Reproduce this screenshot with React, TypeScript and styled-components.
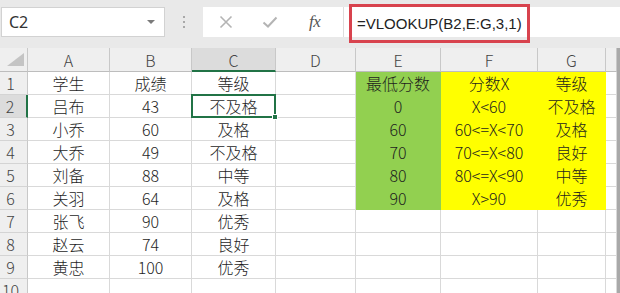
import React from "react";
import styled, { createGlobalStyle } from "styled-components";

const GlobalStyle = createGlobalStyle`
  html, body { margin: 0; padding: 0; background: #ffffff; overflow: hidden; }
  * { box-sizing: border-box; }
`;

const CJK = `"Noto Sans CJK SC", "Noto Sans", sans-serif`;

const Window = styled.div`
  width: 620px;
  height: 293px;
  overflow: hidden;
  background: #ffffff;
`;

const Toolbar = styled.div`
  height: 48px;
  background: #e9e9e9;
  display: flex;
  align-items: flex-start;
  padding: 7px 0 0 1px;
`;

const NameBox = styled.div`
  width: 164px;
  height: 30px;
  background: #ffffff;
  border: 1px solid #d2d2d2;
  display: flex;
  align-items: center;
  justify-content: space-between;
  padding: 0 9px 0 7px;
  font-family: "Noto Sans", sans-serif;
  font-size: 16px;
  color: #333333;
`;

const DropArrow = styled.span`
  width: 0;
  height: 0;
  border-left: 4px solid transparent;
  border-right: 4px solid transparent;
  border-top: 4px solid #7a7a7a;
`;

const Grip = styled.div`
  width: 38px;
  height: 30px;
  display: flex;
  flex-direction: column;
  align-items: center;
  justify-content: center;
  gap: 3px;
`;

const GripDot = styled.span`
  width: 2px;
  height: 2px;
  background: #a8a8a8;
`;

const FxBox = styled.div`
  width: 140px;
  height: 30px;
  background: #ffffff;
  display: flex;
  align-items: center;
  padding-left: 16px;
`;

const IconSlot = styled.span<{ $gap: number }>`
  display: inline-flex;
  margin-right: ${(p) => p.$gap}px;
`;

const FxText = styled.span`
  font-family: "Liberation Serif", serif;
  font-style: italic;
  font-size: 17px;
  color: #555555;
  letter-spacing: -0.5px;
`;

const FormulaInput = styled.div`
  flex: 1;
  height: 30px;
  background: #ffffff;
  border-left: 1px solid #dddddd;
  display: flex;
  align-items: center;
  padding-left: 5px;
`;

const RedBox = styled.div`
  width: 181px;
  height: 39px;
  margin-top: 3px;
  border: 3px solid #d8434e;
  display: flex;
  align-items: center;
  padding-left: 5px;
  font-family: "Liberation Sans", Arial, sans-serif;
  font-size: 15px;
  color: #222222;
  white-space: nowrap;
`;

const SheetArea = styled.div`
  display: flex;
  height: 245px;
`;

const Grid = styled.div`
  display: grid;
  grid-template-columns: 28px 82px 82px 84px 80px 85px 97px 68px 11px;
  grid-template-rows: 24px repeat(10, 23px);
  width: 617px;
`;

const ScrollEdge = styled.div`
  width: 3px;
  background: #a9a9a9;
`;

const Corner = styled.div`
  background: #efefef;
  border-right: 1px solid #c8c8c8;
  border-bottom: 1px solid #bdbdbd;
  display: flex;
  align-items: flex-end;
  justify-content: flex-end;
  padding: 0 3px 5px 0;
`;

const CornerTriangle = styled.span`
  width: 0;
  height: 0;
  border-left: 17px solid transparent;
  border-bottom: 13px solid #c4c4c4;
`;

const ColHeader = styled.div<{ $active?: boolean }>`
  background: ${(p) => (p.$active ? "#dcdcdc" : "#efefef")};
  border-right: 1px solid #c8c8c8;
  border-bottom: ${(p) => (p.$active ? "2px solid #217346" : "1px solid #bdbdbd")};
  display: flex;
  align-items: center;
  justify-content: center;
  padding-top: 1px;
  font-family: ${CJK};
  font-weight: 300;
  font-size: 16px;
  color: #444444;
`;

const RowHeader = styled.div<{ $active?: boolean }>`
  background: ${(p) => (p.$active ? "#dcdcdc" : "#efefef")};
  border-right: ${(p) => (p.$active ? "2px solid #217346" : "1px solid #c8c8c8")};
  border-bottom: 1px solid #d4d4d4;
  display: flex;
  align-items: flex-end;
  justify-content: center;
  padding-right: 6px;
  font-family: ${CJK};
  font-weight: 300;
  font-size: 16px;
  line-height: 21px;
  color: #444444;
`;

const Cell = styled.div<{ $fill?: string }>`
  position: relative;
  background: ${(p) => p.$fill || "#ffffff"};
  border-right: 1px solid ${(p) => p.$fill || "#d9d9d9"};
  border-bottom: 1px solid ${(p) => p.$fill || "#d9d9d9"};
  display: flex;
  align-items: flex-end;
  justify-content: center;
  font-family: ${CJK};
  font-weight: 300;
  font-size: 16px;
  line-height: 21px;
  color: #1e1e1e;
  white-space: nowrap;
`;

const Selection = styled.div`
  position: absolute;
  left: -1px;
  top: -1px;
  right: -1px;
  bottom: -1px;
  border: 2px solid #217346;
  z-index: 2;
  pointer-events: none;
`;

const FillHandle = styled.span`
  position: absolute;
  right: -4px;
  bottom: -4px;
  width: 6px;
  height: 6px;
  background: #217346;
  border: 1px solid #ffffff;
`;

const GREEN = "#92d050";
const YELLOW = "#ffff00";

const columns = ["A", "B", "C", "D", "E", "F", "G", ""];

const rows: string[][] = [
  ["学生", "成绩", "等级", "", "最低分数", "分数X", "等级"],
  ["吕布", "43", "不及格", "", "0", "X<60", "不及格"],
  ["小乔", "60", "及格", "", "60", "60<=X<70", "及格"],
  ["大乔", "49", "不及格", "", "70", "70<=X<80", "良好"],
  ["刘备", "88", "中等", "", "80", "80<=X<90", "中等"],
  ["关羽", "64", "及格", "", "90", "X>90", "优秀"],
  ["张飞", "90", "优秀"],
  ["赵云", "74", "良好"],
  ["黄忠", "100", "优秀"],
  [],
];

const fillFor = (r: number, c: number): string | undefined => {
  if (r > 5) return undefined;
  if (c === 4) return GREEN;
  if (c === 5 || c === 6) return YELLOW;
  return undefined;
};

const CloseIcon = () => (
  <svg width="14" height="14" viewBox="0 0 14 14">
    <path d="M1.5 1.5 L12.5 12.5 M12.5 1.5 L1.5 12.5" stroke="#b4b4b4" strokeWidth="1.6" fill="none" />
  </svg>
);

const CheckIcon = () => (
  <svg width="16" height="14" viewBox="0 0 16 14">
    <path d="M1.5 7.5 L6 11.5 L14.5 2.5" stroke="#b4b4b4" strokeWidth="2" fill="none" />
  </svg>
);

export default function App() {
  return (
    <Window>
      <GlobalStyle />
      <Toolbar>
        <NameBox>
          <span>C2</span>
          <DropArrow />
        </NameBox>
        <Grip>
          <GripDot />
          <GripDot />
          <GripDot />
        </Grip>
        <FxBox>
          <IconSlot $gap={29}>
            <CloseIcon />
          </IconSlot>
          <IconSlot $gap={31}>
            <CheckIcon />
          </IconSlot>
          <FxText>fx</FxText>
        </FxBox>
        <FormulaInput>
          <RedBox>=VLOOKUP(B2,E:G,3,1)</RedBox>
        </FormulaInput>
      </Toolbar>
      <SheetArea>
        <Grid>
          <Corner>
            <CornerTriangle />
          </Corner>
          {columns.map((c, i) => (
            <ColHeader key={`h${i}`} $active={c === "C"}>
              {c}
            </ColHeader>
          ))}
          {rows.map((row, r) => (
            <React.Fragment key={`r${r}`}>
              <RowHeader $active={r === 1}>{r + 1}</RowHeader>
              {Array.from({ length: 8 }).map((_, c) => (
                <Cell key={`c${r}-${c}`} $fill={fillFor(r, c)}>
                  {row[c] || ""}
                  {r === 1 && c === 2 && (
                    <Selection>
                      <FillHandle />
                    </Selection>
                  )}
                </Cell>
              ))}
            </React.Fragment>
          ))}
        </Grid>
        <ScrollEdge />
      </SheetArea>
    </Window>
  );
}
